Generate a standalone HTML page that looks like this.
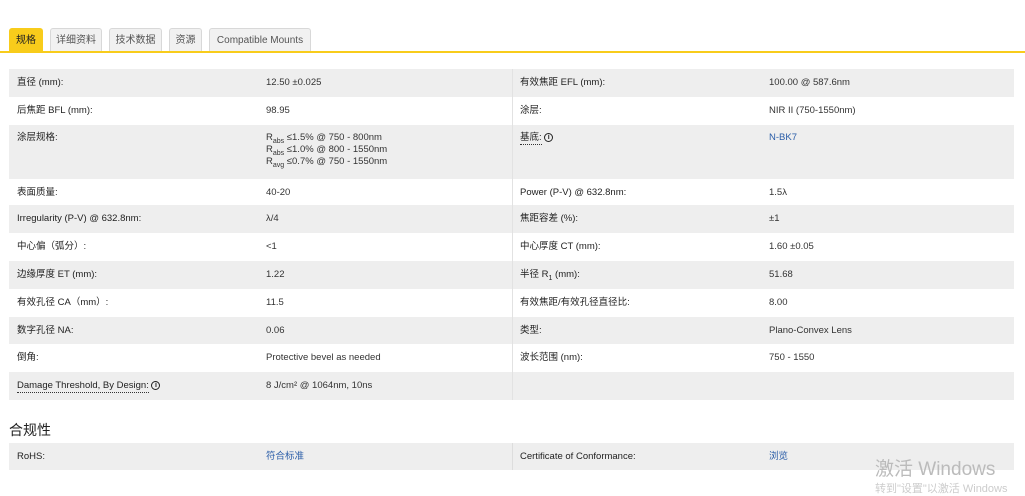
<!DOCTYPE html>
<html><head><meta charset="utf-8"><style>
*{margin:0;padding:0;box-sizing:border-box}
body{width:1025px;height:487px;overflow:hidden;background:#fff;font-family:"Liberation Sans","Noto Sans CJK SC",sans-serif;font-size:9.5px;color:#333;position:relative}
.tab{position:absolute;top:28px;height:24px;border:1px solid #d8d8d8;border-bottom:none;background:#f1f1f1;border-radius:3px 3px 0 0;font-size:10px;color:#555;line-height:24px;text-align:center}
.tab.on{background:#f8cc1b;border-color:#f8cc1b;color:#222}
.line{position:absolute;left:0;top:51px;width:1025px;height:2px;background:#f8cc1b}
.row{position:absolute;left:9px;width:1005px}
.g{background:#eee}
.c{position:absolute;top:0;white-space:nowrap;line-height:27px;height:27px}
.l{color:#222}
.t{top:7px;line-height:12px;height:auto}
.vl{position:absolute;left:512px;width:1px;background:#ddd}
a{color:#2a5da8;text-decoration:none}
.u{border-bottom:1px dotted #333;line-height:12px;display:inline-block}
.i{display:inline-block;width:9px;height:9px;border:1.3px solid #222;border-radius:50%;font-size:7px;line-height:7px;text-align:center;font-weight:bold;vertical-align:middle}
sub{font-size:7px;line-height:0}
.m{line-height:12px;top:7px;height:auto}
</style></head><body>
<div class="tab on" style="left:9px;width:34px">规格</div>
<div class="tab" style="left:50px;width:52px">详细资料</div>
<div class="tab" style="left:109px;width:53px">技术数据</div>
<div class="tab" style="left:169px;width:33px">资源</div>
<div class="tab" style="left:209px;width:102px">Compatible Mounts</div>
<div class="line"></div>

<div class="row g" style="top:69px;height:28px"><span class="c l" style="left:8px">直径 (mm):</span><span class="c" style="left:257px">12.50 ±0.025</span><span class="c l" style="left:511px">有效焦距 EFL (mm):</span><span class="c" style="left:760px">100.00 @ 587.6nm</span></div>
<div class="row" style="top:97px;height:28px"><span class="c l" style="left:8px">后焦距 BFL (mm):</span><span class="c" style="left:257px">98.95</span><span class="c l" style="left:511px">涂层:</span><span class="c" style="left:760px">NIR II (750-1550nm)</span></div>
<div class="row g" style="top:125px;height:54px"><span class="c t l" style="left:8px">涂层规格:</span><span class="c m" style="left:257px">R<sub>abs</sub> ≤1.5% @ 750 - 800nm<br>R<sub>abs</sub> ≤1.0% @ 800 - 1550nm<br>R<sub>avg</sub> ≤0.7% @ 750 - 1550nm</span><span class="c t l" style="left:511px"><span class="u">基底:</span> <span class="i">i</span></span><span class="c t" style="left:760px"><a>N-BK7</a></span></div>
<div class="row" style="top:179px;height:26px"><span class="c l" style="left:8px">表面质量:</span><span class="c" style="left:257px">40-20</span><span class="c l" style="left:511px">Power (P-V) @ 632.8nm:</span><span class="c" style="left:760px">1.5λ</span></div>
<div class="row g" style="top:205px;height:28px"><span class="c l" style="left:8px">Irregularity (P-V) @ 632.8nm:</span><span class="c" style="left:257px">λ/4</span><span class="c l" style="left:511px">焦距容差 (%):</span><span class="c" style="left:760px">±1</span></div>
<div class="row" style="top:233px;height:28px"><span class="c l" style="left:8px">中心偏（弧分）:</span><span class="c" style="left:257px">&lt;1</span><span class="c l" style="left:511px">中心厚度 CT (mm):</span><span class="c" style="left:760px">1.60 ±0.05</span></div>
<div class="row g" style="top:261px;height:28px"><span class="c l" style="left:8px">边缘厚度 ET (mm):</span><span class="c" style="left:257px">1.22</span><span class="c l" style="left:511px">半径 R<sub>1</sub> (mm):</span><span class="c" style="left:760px">51.68</span></div>
<div class="row" style="top:289px;height:28px"><span class="c l" style="left:8px">有效孔径 CA（mm）:</span><span class="c" style="left:257px">11.5</span><span class="c l" style="left:511px">有效焦距/有效孔径直径比:</span><span class="c" style="left:760px">8.00</span></div>
<div class="row g" style="top:317px;height:27px"><span class="c l" style="left:8px">数字孔径 NA:</span><span class="c" style="left:257px">0.06</span><span class="c l" style="left:511px">类型:</span><span class="c" style="left:760px">Plano-Convex Lens</span></div>
<div class="row" style="top:344px;height:28px"><span class="c l" style="left:8px">倒角:</span><span class="c" style="left:257px">Protective bevel as needed</span><span class="c l" style="left:511px">波长范围 (nm):</span><span class="c" style="left:760px">750 - 1550</span></div>
<div class="row g" style="top:372px;height:28px"><span class="c l" style="left:8px"><span class="u">Damage Threshold, By Design:</span> <span class="i">i</span></span><span class="c" style="left:257px">8 J/cm² @ 1064nm, 10ns</span></div>
<div class="vl" style="top:69px;height:331px;background:#e2e2e2"></div>

<div style="position:absolute;left:9px;top:420px;font-size:14px;color:#222">合规性</div>
<div class="row g" style="top:443px;height:27px"><span class="c l" style="left:8px">RoHS:</span><span class="c" style="left:257px"><a>符合标准</a></span><span class="c l" style="left:511px">Certificate of Conformance:</span><span class="c" style="left:760px"><a>浏览</a></span></div>
<div class="vl" style="top:443px;height:27px"></div>
<div style="position:absolute;left:875px;top:454px;font-size:19px;color:#bbb">激活 Windows</div>
<div style="position:absolute;left:875px;top:480px;font-size:11px;color:#ccc">转到"设置"以激活 Windows</div>
</body></html>
